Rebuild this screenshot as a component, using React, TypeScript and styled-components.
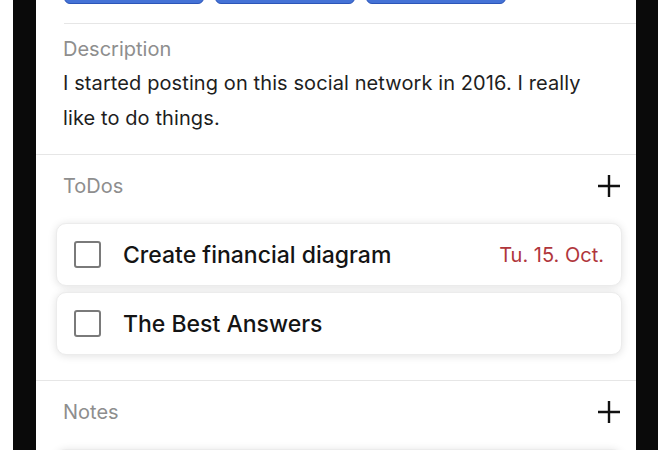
import styled, { createGlobalStyle } from 'styled-components'

const GlobalStyle = createGlobalStyle`
    body {
        margin: 0;
        background: #fff;
        font-family: Inter, "Noto Sans", sans-serif;
    }
`

interface Todo {
    title: string
    due?: string
}

const todos: Todo[] = [
    { title: 'Create financial diagram', due: 'Tu. 15. Oct.' },
    { title: 'The Best Answers' },
]

const PlusIcon = () => (
    <svg width='24' height='24' viewBox='0 0 24 24'>
        <path d='M12 1v22M1 12h22' stroke='#111' strokeWidth='2.4' strokeLinecap='butt' fill='none' />
    </svg>
)

const Section: React.FC<{ title: string; children?: React.ReactNode }> = ({ title, children }) => (
    <StyledSection>
        <SectionHeader>
            <Label>{title}</Label>
            <AddButton><PlusIcon /></AddButton>
        </SectionHeader>
        <CardList>{children}</CardList>
    </StyledSection>
)

export default function App() {
    return (
        <>
            <GlobalStyle />
            <Page>
                <Phone>
                    <ButtonRow>
                        <TagButton />
                        <TagButton />
                        <TagButton />
                    </ButtonRow>
                    <Description>
                        <Label>Description</Label>
                        <Body>I started posting on this social network in 2016. I really like to do things.</Body>
                    </Description>
                    <Section title='ToDos'>
                        {todos.map((t) => (
                            <TodoCard key={t.title}>
                                <Checkbox />
                                <TodoTitle>{t.title}</TodoTitle>
                                {t.due && <DueDate>{t.due}</DueDate>}
                            </TodoCard>
                        ))}
                    </Section>
                    <Section title='Notes'>
                        <NoteCard />
                    </Section>
                </Phone>
            </Page>
        </>
    )
}

const Page = styled.div`
    height: 450px;
    overflow: hidden;
    display: flex;
    padding: 0 8px 0 13px;
`
const Phone = styled.div`
    flex: 1;
    background: #fff;
    border-left: 23px solid #0a0a0a;
    border-right: 22px solid #0a0a0a;
    display: flex;
    flex-direction: column;
`
const ButtonRow = styled.div`
    display: flex;
    gap: 11px;
    margin: -31px 0 0 28px;
    padding-bottom: 19px;
    border-bottom: 1px solid #e6e6e6;
`
const TagButton = styled.div`
    width: 138px;
    height: 33px;
    background: #4472d6;
    border: 1px solid #2c55b8;
    border-radius: 6px;
`
const Description = styled.div`
    padding: 14px 20px 18px 27px;
    border-bottom: 1px solid #e6e6e6;
`
const Label = styled.div`
    font-size: 20px;
    line-height: 22px;
    color: #8e8e8e;
`
const Body = styled.p`
    margin: 6px 0 0;
    font-size: 20px;
    line-height: 35px;
    letter-spacing: 0.1px;
    color: #1e1e1e;
    max-width: 540px;
`
const StyledSection = styled.section`
    padding: 19px 14px 25px 20px;
    border-bottom: 1px solid #e6e6e6;
`
const SectionHeader = styled.div`
    display: flex;
    align-items: center;
    justify-content: space-between;
    height: 24px;
    padding: 0 1px 0 7px;
    margin-bottom: 25px;
`
const AddButton = styled.div`
    display: flex;
    width: 24px;
    height: 24px;
`
const CardList = styled.div`
    display: flex;
    flex-direction: column;
    gap: 6px;
`
const TodoCard = styled.div`
    display: flex;
    align-items: center;
    height: 63px;
    box-sizing: border-box;
    padding: 0 17px;
    background: #fff;
    border: 1px solid #ececec;
    border-radius: 10px;
    box-shadow: 0 1px 8px rgba(0, 0, 0, 0.12);
`
const NoteCard = styled(TodoCard)`
    height: 80px;
`
const Checkbox = styled.div`
    width: 27px;
    height: 27px;
    box-sizing: border-box;
    border: 2px solid #7a7a7a;
    border-radius: 3px;
    flex-shrink: 0;
`
const TodoTitle = styled.span`
    margin-left: 22px;
    flex: 1;
    font-size: 23px;
    font-weight: 500;
    color: #141414;
`
const DueDate = styled.span`
    font-size: 20px;
    color: #b0363c;
`
